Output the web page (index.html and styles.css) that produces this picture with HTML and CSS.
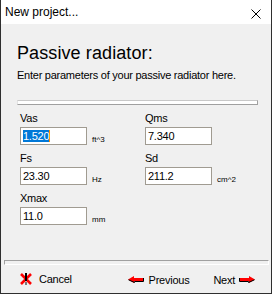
FILE: index.html
```html
<!DOCTYPE html>
<html>
<head>
<meta charset="utf-8">
<link rel="stylesheet" href="styles.css">
</head>
<body>
<div class="window">
  <div class="titlebar">
    <span class="title">New project...</span>
    <svg class="close" width="10" height="10" viewBox="0 0 10 10"><path d="M0.5 0.5 L9.5 9.5 M9.5 0.5 L0.5 9.5" stroke="#000" stroke-width="1" fill="none"/></svg>
  </div>
  <div class="content">
    <h1 class="heading">Passive radiator:</h1>
    <p class="subtitle">Enter parameters of your passive radiator here.</p>
    <div class="sep-top"></div>
    <div class="fields">
      <div class="field">
        <div class="label">Vas</div>
        <div class="row"><div class="input"><span class="sel">1.520</span></div><span class="unit">ft^3</span></div>
      </div>
      <div class="field">
        <div class="label">Qms</div>
        <div class="row"><div class="input">7.340</div></div>
      </div>
      <div class="field">
        <div class="label">Fs</div>
        <div class="row"><div class="input">23.30</div><span class="unit">Hz</span></div>
      </div>
      <div class="field">
        <div class="label">Sd</div>
        <div class="row"><div class="input">211.2</div><span class="unit">cm^2</span></div>
      </div>
      <div class="field">
        <div class="label">Xmax</div>
        <div class="row"><div class="input">11.0</div><span class="unit">mm</span></div>
      </div>
    </div>
  </div>
  <div class="footer">
    <div class="sep-bottom"></div>
    <div class="buttons">
      <div class="btn btn-cancel">
        <svg class="icon-cancel" width="12" height="12" viewBox="0 0 12 12">
          <path d="M1 1 L11 11 M11 1 L1 11" stroke="#ff0000" stroke-width="2.6" fill="none"/>
          <rect x="5" y="0" width="2" height="8" fill="#000"/>
          <rect x="5.5" y="9" width="1" height="3" fill="#000"/>
        </svg>
        <span class="btn-text">Cancel</span>
      </div>
      <div class="btn btn-prev">
        <svg class="arrow" width="16" height="7" viewBox="0 0 16 7">
          <polygon points="0,3.5 6,0 6,2 16,2 16,5 6,5 6,7" fill="#ff0000"/>
          <polyline points="0.5,3.8 6.5,6.5 6.5,5.5 15.5,5.5 15.5,2" stroke="#000" stroke-width="1" fill="none"/>
        </svg>
        <span class="btn-text">Previous</span>
      </div>
      <div class="btn btn-next">
        <span class="btn-text">Next</span>
        <svg class="arrow" width="16" height="7" viewBox="0 0 16 7">
          <polygon points="16,3.5 10,0 10,2 0,2 0,5 10,5 10,7" fill="#ff0000"/>
          <polyline points="0.5,2 0.5,5.5 9.5,5.5 9.5,6.5 15.5,3.8" stroke="#000" stroke-width="1" fill="none"/>
        </svg>
      </div>
    </div>
  </div>
</div>
</body>
</html>
```
FILE: styles.css
```css
html, body {
  margin: 0;
  padding: 0;
  background: #f0f0f0;
}

.window {
  width: 272px;
  height: 294px;
  box-sizing: border-box;
  border: 1px solid #2f2f2f;
  border-top: none;
  background: #f0f0f0;
  display: flex;
  flex-direction: column;
  font-family: "Liberation Sans", Arial, sans-serif;
  font-size: 11px;
  letter-spacing: -0.25px;
  color: #000;
}

.titlebar {
  height: 24px;
  background: #fff;
  display: flex;
  align-items: flex-start;
  flex-shrink: 0;
}

.title {
  font-size: 12px;
  letter-spacing: 0;
  line-height: 23px;
  padding-top: 1px;
  margin-left: 4px;
}

.close {
  margin-left: auto;
  margin-right: 10px;
  margin-top: 9px;
}

.content {
  padding: 19px 0 0 16px;
}

.heading {
  margin: 0;
  font-size: 18px;
  font-weight: normal;
  line-height: 20px;
  letter-spacing: 0.1px;
}

.subtitle {
  margin: 6px 0 0;
  line-height: 13px;
}

.sep-top {
  margin-top: 18px;
  width: 241px;
  height: 5px;
  box-sizing: border-box;
  background: #fff;
  border-top: 1px solid #c8c8c8;
  border-left: 1px solid #e3e3e3;
  border-right: 1px solid #a0a0a0;
  border-bottom: 1px solid #a0a0a0;
}

.fields {
  margin-top: 7px;
  padding-left: 3px;
  display: grid;
  grid-template-columns: 125px auto;
  grid-auto-rows: 40px;
}

.label {
  line-height: 13px;
  margin-bottom: 2px;
}

.row {
  display: flex;
}

.input {
  width: 67px;
  height: 18px;
  box-sizing: border-box;
  border: 1px solid #a09b91;
  background: #fff;
  padding-left: 2px;
  line-height: 16px;
  white-space: nowrap;
}

.sel {
  background: #0078d7;
  color: #fff;
  border-right: 1px solid #ff8c00;
}

.unit {
  font-size: 8px;
  letter-spacing: 0;
  line-height: 8px;
  margin-left: 5px;
  align-self: flex-end;
  margin-bottom: 1px;
}

.footer {
  margin-top: auto;
}

.sep-bottom {
  margin-left: 3px;
  width: 265px;
  height: 5px;
  box-sizing: border-box;
  border-top: 1px solid #a0a0a0;
  border-left: 1px solid #a0a0a0;
  border-bottom: 1px solid #fff;
  border-right: 1px solid #fff;
}

.buttons {
  height: 28px;
  box-sizing: border-box;
  padding: 8px 16px 0 19px;
  display: flex;
  align-items: flex-start;
  line-height: 13px;
}

.btn {
  display: flex;
  align-items: flex-start;
}

.icon-cancel {
  margin-right: 7px;
}

.btn-prev {
  margin-left: auto;
}

.btn-prev .btn-text,
.btn-next .btn-text {
  margin-top: 1px;
}

.btn-prev .arrow {
  margin-top: 3px;
  margin-right: 5px;
}

.btn-next {
  margin-left: 24px;
}

.btn-next .arrow {
  margin-top: 3px;
  margin-left: 4px;
}
```
